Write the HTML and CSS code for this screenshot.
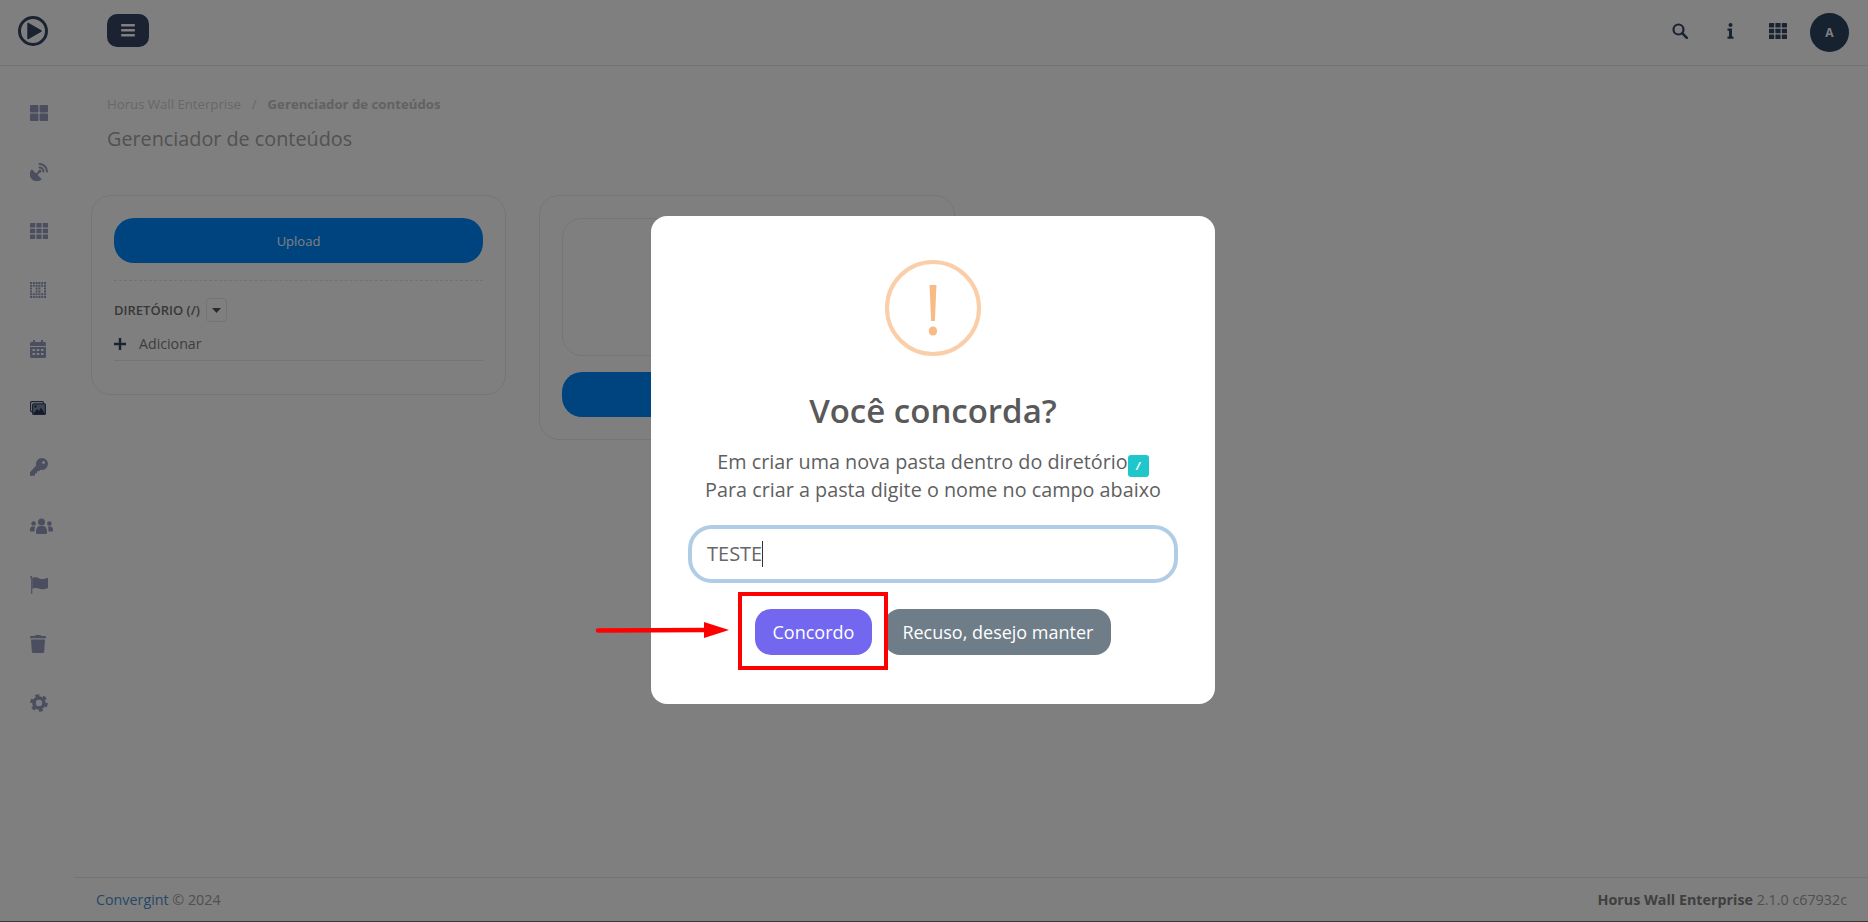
FILE: index.html
```html
<!DOCTYPE html>
<html lang="en">
<head>
 <meta charset="UTF-8">
 <title>Gerenciador de conteúdos</title>
 <link rel="stylesheet" href="styles.css">
</head>
<body>
 <div class="page">
  <header class="topbar">
   <div class="brand">
    <svg width="32" height="32" viewBox="0 0 32 32"><circle cx="16" cy="16" r="13.5" fill="none" stroke="#364666" stroke-width="3"/><path d="M11 8.500 L24 16 L11 23.500Z" fill="#364666" stroke="#364666" stroke-width="1.500" stroke-linejoin="round"/></svg>
   </div>
   <button class="menu-button">
    <svg width="14" height="13" viewBox="0 0 14 13"><rect y="0" width="14" height="2.600" rx="1"/><rect y="5" width="14" height="2.600" rx="1"/><rect y="10" width="14" height="2.600" rx="1"/></svg>
   </button>
   <div class="topbar-actions">
    <svg class="top-icon" width="16" height="16" viewBox="0 0 16 16"><circle cx="6.500" cy="6.500" r="5" fill="none" stroke-width="2.200"/><path d="M10.200 10.200 L14.800 14.800" fill="none" stroke-width="2.600" stroke-linecap="round"/></svg>
    <svg class="top-icon solid" width="7" height="16" viewBox="0 0 7 16"><circle cx="3.500" cy="2" r="2"/><path d="M0.500 5.500h4.500v8h1.500v2.300H0.500v-2.300h1.500v-5.700H0.500z"/></svg>
    <svg class="top-icon solid" width="18" height="16" viewBox="0 0 18 16"><rect width="5.200" height="4.600" rx=".5"/><rect x="6.400" width="5.200" height="4.600" rx=".5"/><rect x="12.800" width="5.200" height="4.600" rx=".5"/><rect y="5.700" width="5.200" height="4.600" rx=".5"/><rect x="6.400" y="5.700" width="5.200" height="4.600" rx=".5"/><rect x="12.800" y="5.700" width="5.200" height="4.600" rx=".5"/><rect y="11.400" width="5.200" height="4.600" rx=".5"/><rect x="6.400" y="11.400" width="5.200" height="4.600" rx=".5"/><rect x="12.800" y="11.400" width="5.200" height="4.600" rx=".5"/></svg>
    <div class="avatar">A</div>
   </div>
  </header>

  <div class="main">
   <nav class="sidebar">
    <svg width="18" height="16" viewBox="0 0 18 16"><rect width="8.400" height="7.400" rx=".8"/><rect x="9.600" width="8.400" height="7.400" rx=".8"/><rect y="8.600" width="8.400" height="7.400" rx=".8"/><rect x="9.600" y="8.600" width="8.400" height="7.400" rx=".8"/></svg>
    <svg width="18" height="18" viewBox="0 0 18 18"><path d="M1.800 6.200 L11.800 16.200 A7 7 0 0 1 1.800 6.200Z"/><path d="M5.500 12.500 L9.500 8.500" stroke="#969cbe" stroke-width="2"/><circle cx="10" cy="8" r="1.600"/><path d="M9.500 1 A7.500 7.500 0 0 1 17 8.500 M9.500 4.500 A4 4 0 0 1 13.500 8.500" fill="none" stroke="#969cbe" stroke-width="2" stroke-linecap="round"/></svg>
    <svg width="18" height="16" viewBox="0 0 18 16"><rect width="5.200" height="4.600" rx=".5"/><rect x="6.400" width="5.200" height="4.600" rx=".5"/><rect x="12.800" width="5.200" height="4.600" rx=".5"/><rect y="5.700" width="5.200" height="4.600" rx=".5"/><rect x="6.400" y="5.700" width="5.200" height="4.600" rx=".5"/><rect x="12.800" y="5.700" width="5.200" height="4.600" rx=".5"/><rect y="11.400" width="5.200" height="4.600" rx=".5"/><rect x="6.400" y="11.400" width="5.200" height="4.600" rx=".5"/><rect x="12.800" y="11.400" width="5.200" height="4.600" rx=".5"/></svg>
    <svg width="16" height="16" viewBox="0 0 16 16"><path d="M0 1h16M0 3.800h16M0 12.200h16M0 15h16" stroke="#969cbe" stroke-width="2" stroke-dasharray="2 .8" fill="none"/><path d="M0 6.600h16M0 9.400h16" stroke="#969cbe" stroke-width="2" stroke-dasharray="2 3.600 2 .8 2 3.600 2" fill="none"/></svg>
    <svg width="16" height="18" viewBox="0 0 16 18"><path d="M3 0h2v2h6V0h2v2h1.500A1.500 1.500 0 0 1 16 3.500V6H0V3.500A1.500 1.500 0 0 1 1.500 2H3z"/><path fill-rule="evenodd" d="M0 7h16v9.500a1.500 1.500 0 0 1-1.500 1.500h-13A1.500 1.500 0 0 1 0 16.500zM2.500 9v2h2.500V9zM6.700 9v2h2.600V9zM11 9v2h2.500V9zM2.500 13v2h2.500v-2zM6.700 13v2h2.600v-2zM11 13v2h2.500v-2z"/></svg>
    <svg class="images-icon" width="16" height="14" viewBox="0 0 16 14"><rect x=".6" y=".6" width="12.800" height="10" rx="1" fill="none" stroke="#364666" stroke-width="1.200"/><rect x="2.600" y="2.800" width="12.800" height="10.600" rx="1" fill="#808ca8" stroke="#364666" stroke-width="1.200"/><path d="M3.200 13 L7 8 L9 10 L11 6.500 L15 13z" fill="#2a3650"/><circle cx="5.500" cy="5.500" r="1.200" fill="#2a3650"/></svg>
    <svg width="18" height="18" viewBox="0 0 18 18"><path fill-rule="evenodd" d="M12 0a6 6 0 1 1-1.600 11.800L9 13.200H7v2H5v2.300L.8 18 0 17.200v-3L6.200 7.600A6 6 0 0 1 12 0zm1.500 3a1.500 1.500 0 1 0 0 3 1.500 1.500 0 0 0 0-3z"/></svg>
    <svg width="23" height="16" viewBox="0 0 23 16"><circle cx="11.500" cy="4" r="3.500"/><path d="M6 13c0-3 2-5 4-5h3c2 0 4 2 4 5v1.500a1.500 1.500 0 0 1-1.500 1.500h-8A1.500 1.500 0 0 1 6 14.500z"/><circle cx="3.600" cy="5.500" r="2.300"/><circle cx="19.400" cy="5.500" r="2.300"/><path d="M0 12c0-2 1-3.500 2.500-3.500h2.500C4.700 10 4.500 11.500 4.500 13.500H1a1 1 0 0 1-1-1.500zM23 12c0-2-1-3.500-2.500-3.500H18c.3 1.500.5 3 .5 5H22a1 1 0 0 0 1-1.500z"/></svg>
    <svg width="18" height="18" viewBox="0 0 18 18"><path d="M1 0a1.300 1.300 0 0 1 1.300 1.300V18H1.200V2.500A1.300 1.300 0 0 1 1 0z"/><path d="M2.300 2c3-1.300 5-.3 7 .5 2.500 1 5 .5 8.700-.7V12c-3 1.500-6 1.700-8.500.8-2.500-.9-4.700-1.200-7.200 0z"/></svg>
    <svg width="16" height="18" viewBox="0 0 16 18"><path d="M5.500 0h5l.6 1.100H15a1 1 0 0 1 1 1v1.200H0V2.100a1 1 0 0 1 1-1h3.900z"/><path d="M1 4.500h14l-.8 12A1.600 1.600 0 0 1 12.600 18H3.400a1.600 1.600 0 0 1-1.600-1.500z"/></svg>
    <svg width="18" height="18" viewBox="0 0 18 18"><circle cx="9" cy="9" r="5" fill="none" stroke="#969cbe" stroke-width="3.600"/><circle cx="9" cy="9" r="7.600" fill="none" stroke="#969cbe" stroke-width="2.500" stroke-dasharray="4 3.960"/></svg>
   </nav>

   <div class="content">
    <div class="page-head">
     <div class="breadcrumb">
      <span>Horus Wall Enterprise</span>
      <span class="sep">/</span>
      <strong>Gerenciador de conteúdos</strong>
     </div>
     <h2>Gerenciador de conteúdos</h2>
    </div>

    <div class="cards">
     <section class="card card-tree">
      <button class="btn-upload">Upload</button>
      <hr class="dashed">
      <div class="dir-row">
       <span class="dir-label">DIRETÓRIO (/)</span>
       <span class="dir-toggle"><svg width="9" height="5" viewBox="0 0 9 5"><path d="M0 0h9L4.500 5z"/></svg></span>
      </div>
      <div class="add-row">
       <svg width="12" height="12" viewBox="0 0 12 12"><path d="M4.800 0h2.400v4.800H12v2.400H7.200V12H4.800V7.200H0V4.800h4.800z"/></svg>
       <span>Adicionar</span>
      </div>
     </section>

     <section class="card card-files">
      <div class="drop-box"></div>
      <button class="btn-upload"></button>
     </section>
    </div>
   </div>
  </div>

  <footer class="footer">
   <div><a class="footer-link">Convergint</a> © 2024</div>
   <div><strong>Horus Wall Enterprise</strong> 2.1.0 c67932c</div>
  </footer>
 </div>

 <!-- confirm dialog -->
 <div class="overlay">
  <div class="modal">
   <div class="warn-icon">!</div>
   <h2 class="modal-title">Você concorda?</h2>
   <div class="modal-text">
    Em criar uma nova pasta dentro do diretório<span class="path-badge">/</span><br>
    Para criar a pasta digite o nome no campo abaixo
   </div>
   <div class="modal-input">TESTE<span class="caret"></span></div>
   <div class="modal-actions">
    <button class="btn btn-confirm">Concordo</button>
    <button class="btn btn-cancel">Recuso, desejo manter</button>
   </div>
   <!-- annotation drawn over the screenshot -->
   <div class="mark-box"></div>
   <svg class="mark-arrow" width="134" height="18" viewBox="0 0 134 18"><path d="M3 9.500 L110 9" stroke="#f00" stroke-width="4.500" stroke-linecap="round"/><path d="M109 1 L134 9 L109 17z" fill="#f00"/></svg>
  </div>
 </div>
</body>
</html>
```

FILE: styles.css
```css
* {
 box-sizing: border-box;
}

html,
body {
 height: 100%;
 margin: 0;
 padding: 0;
 overflow: hidden;
}

body {
 font-family: "Open Sans", sans-serif;
 background-color: #ffffff;
 color: #6e6b7b;
}

.page {
 height: 100%;
 display: flex;
 flex-direction: column;
 border-bottom: 1px solid #707070;
}

/* Top bar */
.topbar {
 height: 66px;
 flex-shrink: 0;
 display: flex;
 align-items: center;
 border-bottom: 1px solid #e8e8e8;
 padding-right: 19px;
}

.brand {
 width: 107px;
 padding-left: 17px;
 margin-top: -3px;
 display: flex;
}

.menu-button {
 width: 42px;
 height: 33px;
 margin-top: -4px;
 border: none;
 border-radius: 10px;
 background-color: #364666;
 display: flex;
 align-items: center;
 justify-content: center;
 padding: 0;
}

.menu-button svg {
 fill: #ffffff;
}

.topbar-actions {
 margin-left: auto;
 display: flex;
 align-items: center;
}

.top-icon {
 fill: none;
 stroke: #364666;
 margin-top: -3px;
}

.top-icon.solid {
 fill: #364666;
 stroke: none;
}

.topbar-actions .top-icon:nth-child(1) {
 margin-right: 39px;
}

.topbar-actions .top-icon:nth-child(2) {
 margin-right: 35px;
}

.topbar-actions .top-icon:nth-child(3) {
 margin-right: 23px;
}

.avatar {
 width: 39px;
 height: 39px;
 border-radius: 50%;
 background-color: #2e4460;
 color: #ffffff;
 font-size: 12px;
 font-weight: 700;
 display: flex;
 align-items: center;
 justify-content: center;
}

.main {
 flex: 1;
 display: flex;
 min-height: 0;
}

/* Side icons */
.sidebar {
 width: 74px;
 flex-shrink: 0;
 padding: 38px 0 0 30px;
 display: flex;
 flex-direction: column;
 align-items: flex-start;
}

.sidebar svg {
 fill: #969cbe;
 height: 18px;
 margin-bottom: 41px;
}

.content {
 flex: 1;
 padding: 28px 0 0 17px;
}

.page-head {
 padding-left: 16px;
 height: 101px;
}

.breadcrumb {
 font-size: 13.2px;
 line-height: 20px;
 color: #d0d0d0;
}

.breadcrumb .sep {
 margin: 0 7.5px;
}

.breadcrumb strong {
 color: #c4c4c4;
 font-weight: 700;
}

.page-head h2 {
 margin: 11px 0 0;
 font-size: 19.8px;
 font-weight: 400;
 line-height: 27px;
 color: #a4a4a4;
}

.cards {
 display: flex;
 align-items: flex-start;
 gap: 33px;
}

.card {
 border: 1px solid #ebebeb;
 border-radius: 20px;
 padding: 22px;
}

.card-tree {
 width: 415px;
 height: 200px;
}

.card-files {
 width: 416px;
 height: 245px;
}

.btn-upload {
 display: block;
 width: 100%;
 height: 45px;
 border: none;
 border-radius: 20px;
 background-color: #0088fe;
 color: #ffffff;
 font-family: inherit;
 font-size: 13px;
}

.dashed {
 border: none;
 border-top: 1px dashed #e4e4e4;
 margin: 17px 0 0;
}

.dir-row {
 display: flex;
 align-items: center;
 margin-top: 17px;
 gap: 6px;
}

.dir-label {
 font-size: 13px;
 font-weight: 600;
 color: #707070;
}

.dir-toggle {
 width: 21px;
 height: 24px;
 border: 1px solid #e8e8e8;
 border-radius: 4px;
 display: flex;
 align-items: center;
 justify-content: center;
}

.dir-toggle svg {
 fill: #555555;
}

.add-row {
 display: flex;
 align-items: center;
 gap: 13px;
 margin-top: 12px;
 padding-bottom: 7px;
 border-bottom: 1px solid #e8e8e8;
 font-size: 14.200px;
 color: #7a7a7a;
}

.add-row svg {
 fill: #364666;
}

.drop-box {
 height: 138px;
 border: 1px solid #ebebeb;
 border-radius: 20px;
 margin-bottom: 16px;
}

/* Footer */
.footer {
 height: 44px;
 flex-shrink: 0;
 margin-left: 74px;
 padding: 0 21px 0 22px;
 border-top: 1px solid #e8e8e8;
 display: flex;
 justify-content: space-between;
 align-items: center;
 font-size: 14.300px;
 color: #a0a0a0;
}

.footer-link {
 color: #4d8fc9;
}

.footer strong {
 color: #7e7e7e;
 font-weight: 700;
}

/* Dialog */
.overlay {
 position: fixed;
 top: 0;
 left: 0;
 width: 100%;
 height: 100%;
 padding: 0 2px 2px 0;
 background-color: rgba(0, 0, 0, 0.5);
 display: flex;
 align-items: center;
 justify-content: center;
}

.modal {
 position: relative;
 width: 564px;
 height: 488px;
 padding: 44px 37px 0;
 background-color: #ffffff;
 border-radius: 16px;
 text-align: center;
 color: #5f5f5f;
}

.warn-icon {
 width: 96px;
 height: 96px;
 margin: 0 auto;
 border: 4px solid #facea8;
 border-radius: 50%;
 color: #f8bb86;
 font-size: 70px;
 font-weight: 400;
 line-height: 88px;
}

.modal-title {
 margin: 33px 0 0;
 font-size: 33px;
 font-weight: 600;
 line-height: 44px;
 color: #595959;
}

.modal-text {
 margin-top: 16px;
 font-size: 19.800px;
 line-height: 26px;
}

.path-badge {
 display: inline-block;
 width: 21px;
 height: 22px;
 vertical-align: -1px;
 border-radius: 3px;
 background-color: #1fc7cb;
 color: #ffffff;
 font-size: 10px;
 font-weight: 700;
 font-style: italic;
 line-height: 22px;
}

.modal-input {
 height: 58px;
 margin-top: 22px;
 padding: 0 15px;
 border: 4px solid #b1cde6;
 border-radius: 24px;
 font-size: 20px;
 line-height: 50px;
 text-align: left;
 color: #666666;
}

.caret {
 display: inline-block;
 width: 1px;
 height: 26px;
 vertical-align: -6px;
 background-color: #333333;
}

.modal-actions {
 display: flex;
 justify-content: center;
 gap: 12px;
 margin-top: 26px;
}

.btn {
 height: 46px;
 border: none;
 border-radius: 16px;
 padding: 0 18px;
 color: #ffffff;
 font-family: inherit;
 font-size: 18px;
}

.btn-confirm {
 background-color: #7367f0;
}

.btn-cancel {
 background-color: #6e7d88;
}

.mark-box {
 position: absolute;
 left: 87px;
 top: 376px;
 width: 150px;
 height: 78px;
 border: 4px solid #ff0000;
}

.mark-arrow {
 position: absolute;
 left: -56px;
 top: 405px;
}
```
